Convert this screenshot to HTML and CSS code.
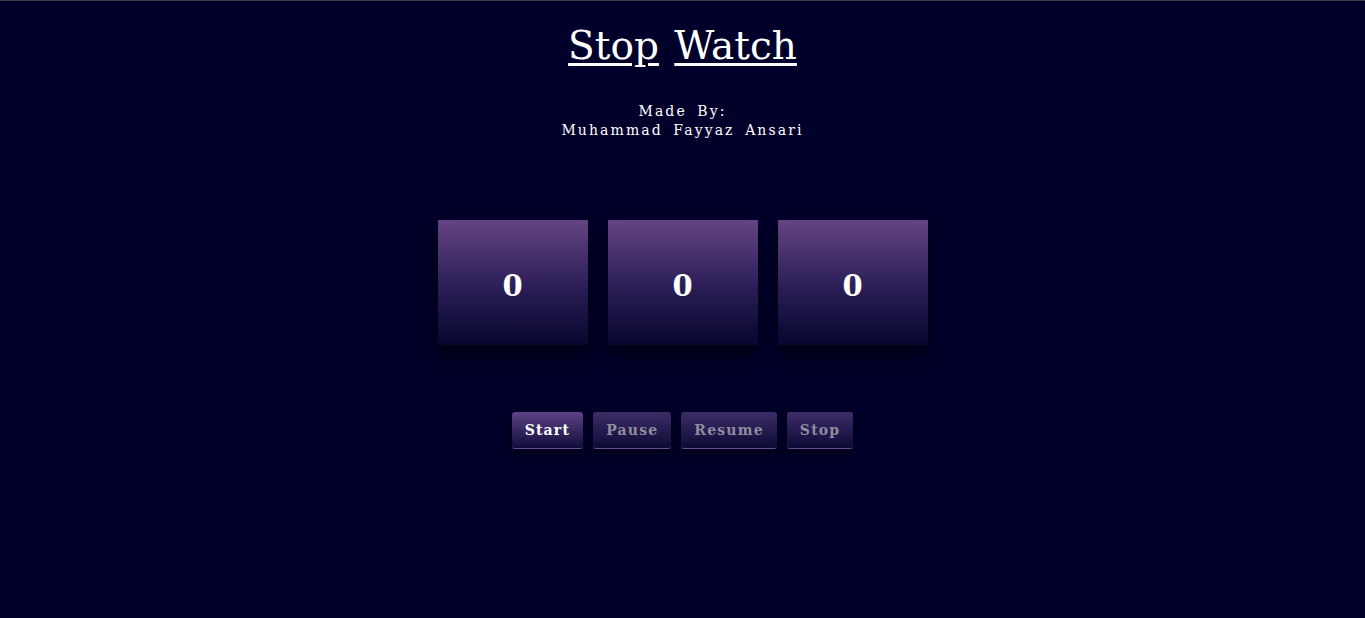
FILE: index.html
```html
<!DOCTYPE html>
<html>
<head>
<meta charset="utf-8">
<link rel="stylesheet" href="styles.css">
</head>
<body>
<div class="topline"></div>
<main class="page">
  <h1 class="title"><u>Stop</u> <u>Watch</u></h1>
  <p class="author">Made By:<br>Muhammad Fayyaz Ansari</p>
  <div class="boxes">
    <div class="box">0</div>
    <div class="box">0</div>
    <div class="box">0</div>
  </div>
  <div class="buttons">
    <button class="btn active">Start</button>
    <button class="btn">Pause</button>
    <button class="btn">Resume</button>
    <button class="btn">Stop</button>
  </div>
</main>
</body>
</html>
```
FILE: styles.css
```css
html, body {
  margin: 0;
  padding: 0;
  background: #00002a;
  height: 100%;
}
body {
  font-family: "DejaVu Serif", "Liberation Serif", serif;
  color: #fff;
}
.topline {
  height: 1px;
  background: #3a3f44;
}
.page {
  display: flex;
  flex-direction: column;
  align-items: center;
}
.title {
  margin: 22px 0 0;
  font-size: 39px;
  font-weight: normal;
  line-height: 46px;
  word-spacing: 3px;
}
.title u {
  text-decoration-thickness: 3px;
  text-underline-offset: 4px;
}
.author {
  margin: 33px 0 0;
  font-size: 14px;
  line-height: 19px;
  letter-spacing: 2.1px;
  word-spacing: 4px;
  text-align: center;
}
.boxes {
  display: flex;
  gap: 20px;
  margin-top: 80px;
}
.box {
  width: 150px;
  height: 125px;
  box-sizing: border-box;
  padding-top: 6px;
  display: flex;
  align-items: center;
  justify-content: center;
  background: linear-gradient(to bottom, #644482 0%, #2a1d55 55%, #06062e 100%);
  box-shadow: 0 10px 14px rgba(0, 0, 8, 0.7);
  font-size: 29px;
  font-weight: bold;
}
.buttons {
  display: flex;
  gap: 10px;
  margin-top: 67px;
}
.btn {
  font-family: "DejaVu Serif", "Liberation Serif", serif;
  font-size: 14px;
  font-weight: bold;
  letter-spacing: 1.2px;
  color: #8f8c9e;
  height: 37px;
  padding: 0 13px;
  border: none;
  border-bottom: 1px solid #6a4c96;
  border-radius: 3px;
  background: linear-gradient(to bottom, #3e2d68 0%, #0c0a36 100%);
  box-shadow: 0 4px 8px rgba(0, 0, 10, 0.6);
}
.btn.active {
  color: #fff;
  background: linear-gradient(to bottom, #5e4286 0%, #100c3a 100%);
}
```
